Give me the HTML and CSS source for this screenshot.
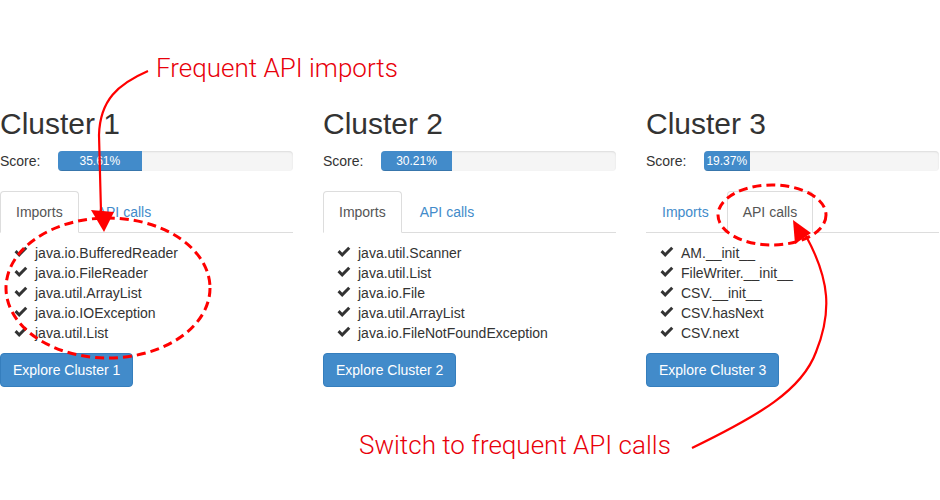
FILE: index.html
```html
<!DOCTYPE html>
<html>
<head>
<meta charset="utf-8">
<link rel="stylesheet" href="styles.css">
</head>
<body>
<div class="page">
  <div class="clusters">
    <div class="cluster">
      <h2 class="title">Cluster 1</h2>
      <div class="score">
        <span class="score-label">Score:</span>
        <div class="progress"><div class="bar" style="width:35.61%">35.61%</div></div>
      </div>
      <ul class="tabs">
        <li class="tab active">Imports</li>
        <li class="tab">API calls</li>
      </ul>
      <ul class="items">
        <li><svg class="ok" viewBox="0 0 14 12"><path d="M0.5 6.2 L2.6 4.1 L5.2 6.7 L11.2 0.7 L13.3 2.8 L5.2 10.9 Z"/></svg>java.io.BufferedReader</li>
        <li><svg class="ok" viewBox="0 0 14 12"><path d="M0.5 6.2 L2.6 4.1 L5.2 6.7 L11.2 0.7 L13.3 2.8 L5.2 10.9 Z"/></svg>java.io.FileReader</li>
        <li><svg class="ok" viewBox="0 0 14 12"><path d="M0.5 6.2 L2.6 4.1 L5.2 6.7 L11.2 0.7 L13.3 2.8 L5.2 10.9 Z"/></svg>java.util.ArrayList</li>
        <li><svg class="ok" viewBox="0 0 14 12"><path d="M0.5 6.2 L2.6 4.1 L5.2 6.7 L11.2 0.7 L13.3 2.8 L5.2 10.9 Z"/></svg>java.io.IOException</li>
        <li><svg class="ok" viewBox="0 0 14 12"><path d="M0.5 6.2 L2.6 4.1 L5.2 6.7 L11.2 0.7 L13.3 2.8 L5.2 10.9 Z"/></svg>java.util.List</li>
      </ul>
      <button class="btn">Explore Cluster 1</button>
    </div>
    <div class="cluster">
      <h2 class="title">Cluster 2</h2>
      <div class="score">
        <span class="score-label">Score:</span>
        <div class="progress"><div class="bar" style="width:30.21%">30.21%</div></div>
      </div>
      <ul class="tabs">
        <li class="tab active">Imports</li>
        <li class="tab">API calls</li>
      </ul>
      <ul class="items">
        <li><svg class="ok" viewBox="0 0 14 12"><path d="M0.5 6.2 L2.6 4.1 L5.2 6.7 L11.2 0.7 L13.3 2.8 L5.2 10.9 Z"/></svg>java.util.Scanner</li>
        <li><svg class="ok" viewBox="0 0 14 12"><path d="M0.5 6.2 L2.6 4.1 L5.2 6.7 L11.2 0.7 L13.3 2.8 L5.2 10.9 Z"/></svg>java.util.List</li>
        <li><svg class="ok" viewBox="0 0 14 12"><path d="M0.5 6.2 L2.6 4.1 L5.2 6.7 L11.2 0.7 L13.3 2.8 L5.2 10.9 Z"/></svg>java.io.File</li>
        <li><svg class="ok" viewBox="0 0 14 12"><path d="M0.5 6.2 L2.6 4.1 L5.2 6.7 L11.2 0.7 L13.3 2.8 L5.2 10.9 Z"/></svg>java.util.ArrayList</li>
        <li><svg class="ok" viewBox="0 0 14 12"><path d="M0.5 6.2 L2.6 4.1 L5.2 6.7 L11.2 0.7 L13.3 2.8 L5.2 10.9 Z"/></svg>java.io.FileNotFoundException</li>
      </ul>
      <button class="btn">Explore Cluster 2</button>
    </div>
    <div class="cluster">
      <h2 class="title">Cluster 3</h2>
      <div class="score">
        <span class="score-label">Score:</span>
        <div class="progress"><div class="bar" style="width:19.37%">19.37%</div></div>
      </div>
      <ul class="tabs">
        <li class="tab">Imports</li>
        <li class="tab active">API calls</li>
      </ul>
      <ul class="items">
        <li><svg class="ok" viewBox="0 0 14 12"><path d="M0.5 6.2 L2.6 4.1 L5.2 6.7 L11.2 0.7 L13.3 2.8 L5.2 10.9 Z"/></svg>AM.__init__</li>
        <li><svg class="ok" viewBox="0 0 14 12"><path d="M0.5 6.2 L2.6 4.1 L5.2 6.7 L11.2 0.7 L13.3 2.8 L5.2 10.9 Z"/></svg>FileWriter.__init__</li>
        <li><svg class="ok" viewBox="0 0 14 12"><path d="M0.5 6.2 L2.6 4.1 L5.2 6.7 L11.2 0.7 L13.3 2.8 L5.2 10.9 Z"/></svg>CSV.__init__</li>
        <li><svg class="ok" viewBox="0 0 14 12"><path d="M0.5 6.2 L2.6 4.1 L5.2 6.7 L11.2 0.7 L13.3 2.8 L5.2 10.9 Z"/></svg>CSV.hasNext</li>
        <li><svg class="ok" viewBox="0 0 14 12"><path d="M0.5 6.2 L2.6 4.1 L5.2 6.7 L11.2 0.7 L13.3 2.8 L5.2 10.9 Z"/></svg>CSV.next</li>
      </ul>
      <button class="btn">Explore Cluster 3</button>
    </div>
  </div>

  <svg class="annot" width="940" height="500" viewBox="0 0 940 500">
    <g fill="none" stroke="#f00" stroke-width="2.2">
      <path d="M148 71 C 118 84 100 100 99 135 L 101 212"/>
      <path d="M692 448 C 760 415 802 390 816 352 C 832 312 830 280 806 236"/>
    </g>
    <g fill="#f00">
      <path d="M91 210 L114 212 L104 232 Z"/>
      <path d="M793 220 L811 233 L795 244 Z"/>
    </g>
    <g fill="none" stroke="#f00" stroke-width="3" stroke-dasharray="9 5">
      <ellipse cx="108" cy="288" rx="102" ry="70"/>
      <ellipse cx="772" cy="215" rx="54" ry="30"/>
    </g>
  </svg>
  <div class="note note-imports">Frequent API imports</div>
  <div class="note note-calls">Switch to frequent API calls</div>
</div>
</body>
</html>
```

FILE: styles.css
```css
* { box-sizing: border-box; }
html, body { margin: 0; padding: 0; background: #fff; }
body {
  font-family: "Liberation Sans", Arial, sans-serif;
  font-size: 14px;
  line-height: 20px;
  color: #333;
}
.page {
  position: relative;
  width: 940px;
  height: 500px;
  overflow: hidden;
}
.clusters {
  display: grid;
  grid-template-columns: 293px 293px 293px;
  column-gap: 30px;
  padding-top: 87px;
}
.cluster { display: flex; flex-direction: column; align-items: flex-start; }
.title {
  margin: 20px 0 10px;
  font-size: 30px;
  font-weight: 500;
  line-height: 33px;
  color: #333;
}
.score {
  display: flex;
  align-items: center;
  width: 100%;
  height: 20px;
  margin-top: 1px;
}
.score-label { width: 58px; flex: none; }
.progress {
  flex: 1;
  height: 20px;
  background: #f5f5f5;
  border-radius: 4px;
  box-shadow: inset 0 1px 2px rgba(0,0,0,.1);
  overflow: hidden;
}
.bar {
  height: 20px;
  background: #428bca;
  color: #fff;
  font-size: 12px;
  line-height: 20px;
  text-align: center;
  box-shadow: inset 0 -1px 0 rgba(0,0,0,.15);
}
.tabs {
  list-style: none;
  margin: 20px 0 0;
  padding: 0;
  width: 100%;
  display: flex;
  border-bottom: 1px solid #ddd;
}
.tab {
  margin-right: 2px;
  margin-bottom: -1px;
  padding: 10px 15px;
  line-height: 20px;
  border: 1px solid transparent;
  border-radius: 4px 4px 0 0;
  color: #428bca;
}
.tab.active {
  color: #555;
  background: #fff;
  border-color: #ddd #ddd transparent;
}
.items {
  list-style: none;
  margin: 10px 0 10px;
  padding: 0 0 0 14px;
}
.items li { display: flex; align-items: center; height: 20px; }
.ok { width: 14px; height: 12px; margin-right: 7px; margin-top: -2px; fill: #333; flex: none; }
.btn {
  font-family: "Liberation Sans", Arial, sans-serif;
  font-size: 14px;
  line-height: 20px;
  padding: 6px 12px;
  color: #fff;
  background: #428bca;
  border: 1px solid #357ebd;
  border-radius: 4px;
}
.annot { position: absolute; left: 0; top: 0; pointer-events: none; }
.note {
  position: absolute;
  font-family: Roboto, "Liberation Sans", sans-serif;
  font-weight: 300;
  font-size: 26px;
  line-height: 30px;
  color: #e8000a;
  white-space: nowrap;
}
.note-imports { left: 156px; top: 53px; }
.note-calls { left: 359px; top: 430px; }
```
